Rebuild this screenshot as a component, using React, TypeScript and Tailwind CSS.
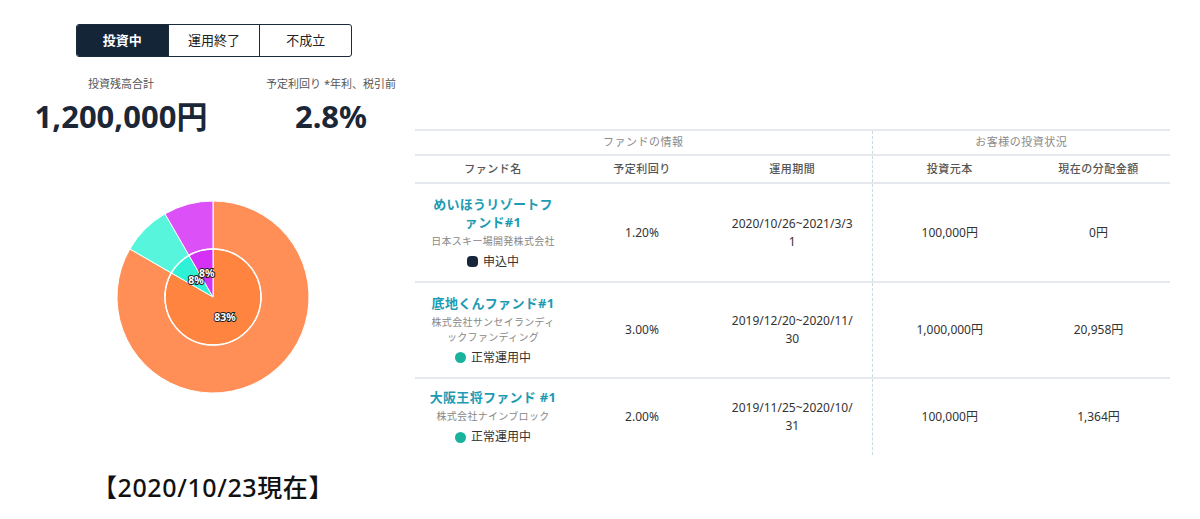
import React from "react";

const FONT = { fontFamily: '"Noto Sans", "Noto Sans CJK JP", sans-serif' };

interface Slice {
  from: number;
  to: number;
  outer: string;
  inner: string;
  label: string;
}

const slices: Slice[] = [
  { from: 0, to: 300, outer: "#ff8f57", inner: "#ff843f", label: "83%" },
  { from: 300, to: 330, outer: "#57f6dc", inner: "#2ef1d6", label: "8%" },
  { from: 330, to: 360, outer: "#dc50f7", inner: "#d530f5", label: "8%" },
];

const CX = 100;
const CY = 100;

function pt(r: number, deg: number) {
  const a = (deg * Math.PI) / 180;
  return [CX + r * Math.sin(a), CY - r * Math.cos(a)];
}

function wedge(r0: number, r1: number, from: number, to: number) {
  const large = to - from > 180 ? 1 : 0;
  const [x1, y1] = pt(r1, from);
  const [x2, y2] = pt(r1, to);
  if (r0 === 0) {
    return `M${CX},${CY} L${x1},${y1} A${r1},${r1} 0 ${large} 1 ${x2},${y2} Z`;
  }
  const [x3, y3] = pt(r0, to);
  const [x4, y4] = pt(r0, from);
  return `M${x1},${y1} A${r1},${r1} 0 ${large} 1 ${x2},${y2} L${x3},${y3} A${r0},${r0} 0 ${large} 0 ${x4},${y4} Z`;
}

function Donut() {
  return (
    <svg width="200" height="200" viewBox="0 0 200 200">
      {slices.map((s, i) => (
        <path key={"o" + i} d={wedge(48, 96, s.from, s.to)} fill={s.outer} stroke="#fff" strokeWidth="1" />
      ))}
      {slices.map((s, i) => (
        <path key={"i" + i} d={wedge(0, 48, s.from, s.to)} fill={s.inner} stroke="#fff" strokeWidth="1" />
      ))}
      <circle cx={CX} cy={CY} r="48" fill="none" stroke="#fff" strokeWidth="1.5" />
      {slices.map((s, i) => {
        const [x, y] = pt(24, (s.from + s.to) / 2);
        return (
          <text
            key={"t" + i}
            x={x}
            y={y + 3.5}
            textAnchor="middle"
            fontSize="10.5"
            fontWeight="700"
            fill="#fff"
            stroke="#222"
            strokeWidth="2"
            paintOrder="stroke"
            style={FONT}
          >
            {s.label}
          </text>
        );
      })}
    </svg>
  );
}

interface Fund {
  name: React.ReactNode;
  company: React.ReactNode;
  status: string;
  dot: string;
  rate: string;
  period: React.ReactNode;
  principal: string;
  dividend: string;
  height: string;
  last?: boolean;
}

const funds: Fund[] = [
  {
    name: (
      <>
        めいほうリゾートフ
        <br />
        ァンド#1
      </>
    ),
    company: "日本スキー場開発株式会社",
    status: "申込中",
    dot: "bg-[#17263a] rounded-[4px]",
    rate: "1.20%",
    period: (
      <>
        2020/10/26~2021/3/3
        <br />1
      </>
    ),
    principal: "100,000円",
    dividend: "0円",
    height: "h-[99px]",
  },
  {
    name: "底地くんファンド#1",
    company: (
      <>
        株式会社サンセイランディ
        <br />
        ックファンディング
      </>
    ),
    status: "正常運用中",
    dot: "bg-[#19b39d] rounded-full",
    rate: "3.00%",
    period: (
      <>
        2019/12/20~2020/11/
        <br />
        30
      </>
    ),
    principal: "1,000,000円",
    dividend: "20,958円",
    height: "h-[96px]",
  },
  {
    name: "大阪王将ファンド #1",
    company: "株式会社ナインブロック",
    status: "正常運用中",
    dot: "bg-[#19b39d] rounded-full",
    rate: "2.00%",
    period: (
      <>
        2019/11/25~2020/10/
        <br />
        31
      </>
    ),
    principal: "100,000円",
    dividend: "1,364円",
    height: "h-[77px]",
    last: true,
  },
];

function FundTable() {
  const rowBorder = "border-b-2 border-[#e5e9ee]";
  const dashed = "border-l border-dashed border-l-[#c8dbe0]";
  return (
    <table className="w-[755px] table-fixed border-collapse text-center" style={FONT}>
      <colgroup>
        <col className="w-[156px]" />
        <col className="w-[142px]" />
        <col className="w-[159px]" />
        <col className="w-[155px]" />
        <col className="w-[143px]" />
      </colgroup>
      <thead>
        <tr className={`h-[25px] border-t-2 border-[#e5e9ee] ${rowBorder}`}>
          <th colSpan={3} className="text-[11px] font-normal tracking-[0.5px] text-[#8a8a8a]">
            ファンドの情報
          </th>
          <th colSpan={2} className={`text-[11px] font-normal tracking-[0.5px] text-[#8a8a8a] ${dashed}`}>
            お客様の投資状況
          </th>
        </tr>
        <tr className={`h-[28px] ${rowBorder}`}>
          <th className="text-[11px] font-medium tracking-[0.5px] text-[#555]">ファンド名</th>
          <th className="text-[11px] font-medium tracking-[0.5px] text-[#555]">予定利回り</th>
          <th className="text-[11px] font-medium tracking-[0.5px] text-[#555]">運用期間</th>
          <th className={`text-[11px] font-medium tracking-[0.5px] text-[#555] ${dashed}`}>投資元本</th>
          <th className="text-[11px] font-medium tracking-[0.5px] text-[#555]">現在の分配金額</th>
        </tr>
      </thead>
      <tbody className="text-[12px] text-[#333]">
        {funds.map((f, i) => (
          <tr key={i} className={`${f.height} ${f.last ? "" : rowBorder}`}>
            <td className="align-middle px-1">
              <div className="text-[13px] font-bold leading-[18px] tracking-[0.3px] text-[#1c9bb2]">{f.name}</div>
              <div className="mt-[3px] text-[10px] leading-[15px] tracking-[0.3px] text-[#888]">{f.company}</div>
              <div className="mt-[4px] flex items-center justify-center gap-[5px] text-[12px] leading-[18px] text-[#333]">
                <span className={`inline-block h-[11px] w-[11px] ${f.dot}`} />
                {f.status}
              </div>
            </td>
            <td className="align-middle">{f.rate}</td>
            <td className="align-middle leading-[18px]">{f.period}</td>
            <td className={`align-middle ${dashed}`}>{f.principal}</td>
            <td className="align-middle">{f.dividend}</td>
          </tr>
        ))}
      </tbody>
    </table>
  );
}

export default function App() {
  return (
    <div className="flex h-[519px] w-[1200px] items-start bg-white" style={FONT}>
      <div className="w-[415px] shrink-0">
        <div className="ml-[76px] mt-[24px] flex h-[33px] w-[276px] overflow-hidden rounded-[3px] border border-[#1b2a3a] text-[13px]">
          <div className="flex flex-1 items-center justify-center bg-[#142538] font-bold text-white">投資中</div>
          <div className="flex flex-1 items-center justify-center border-l border-[#1b2a3a] text-[#222]">運用終了</div>
          <div className="flex flex-1 items-center justify-center border-l border-[#1b2a3a] text-[#222]">不成立</div>
        </div>

        <div className="ml-[16px] mt-[19px] grid w-[420px] grid-cols-2 text-center">
          <div>
            <div className="text-[11px] leading-[16px] text-[#555]">投資残高合計</div>
            <div className="mt-[6px] text-[31px] font-bold leading-[36px] text-[#1b2737]">1,200,000円</div>
          </div>
          <div>
            <div className="text-[11px] leading-[16px] text-[#555]">予定利回り *年利、税引前</div>
            <div className="mt-[6px] text-[31px] font-bold leading-[36px] text-[#1b2737]">2.8%</div>
          </div>
        </div>

        <div className="ml-[113px] mt-[63px]">
          <Donut />
        </div>

        <div className="mt-[75px] w-[426px] text-center text-[25px] font-medium leading-[30px] tracking-[0.6px] text-[#111]" style={FONT}>
          【2020/10/23現在】
        </div>
      </div>

      <div className="pt-[129px]">
        <FundTable />
      </div>
    </div>
  );
}
